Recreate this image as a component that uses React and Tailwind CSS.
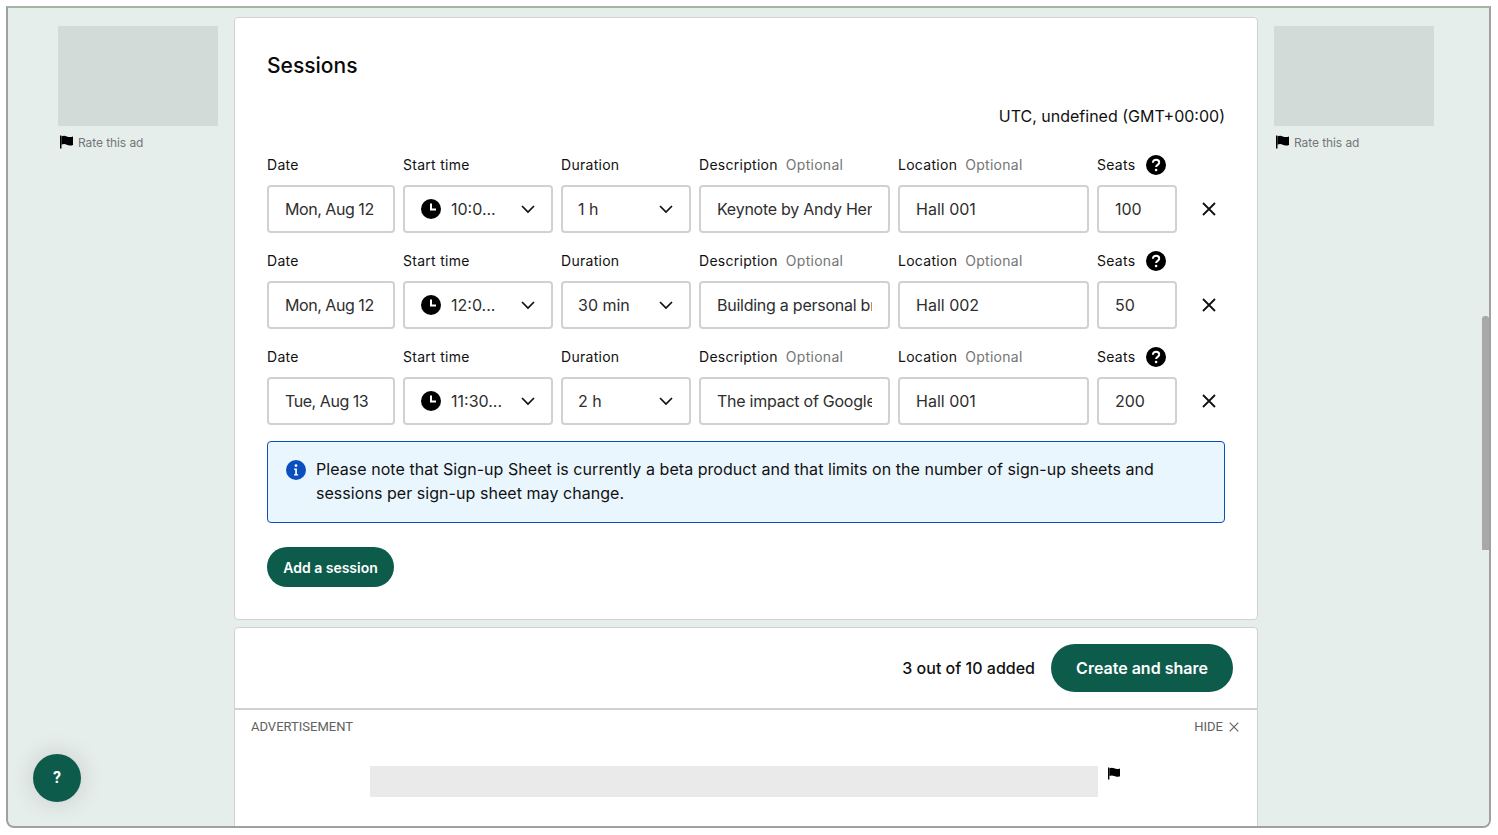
const font = { fontFamily: 'Inter, "Liberation Sans", sans-serif' };

const sessions = [
    { date: 'Mon, Aug 12', time: '10:0...', duration: '1 h', description: 'Keynote by Andy Henderson', location: 'Hall 001', seats: '100' },
    { date: 'Mon, Aug 12', time: '12:0...', duration: '30 min', description: 'Building a personal brand', location: 'Hall 002', seats: '50' },
    { date: 'Tue, Aug 13', time: '11:30...', duration: '2 h', description: 'The impact of Google on search', location: 'Hall 001', seats: '200' },
];

const Flag = ({ className }) => (
    <svg viewBox="0 0 14 14" className={className} fill="currentColor">
        <path d="M0 0h1.6v14H0z" />
        <path d="M1.6 1C3.6-.1 5.4.1 7.3 1c2 .9 4.200 1 6.700.1v9c-2.500.9-4.700.8-6.700-.1-1.900-.9-3.700-1.100-5.700 0z" />
    </svg>
);

const Clock = () => (
    <svg viewBox="0 0 20 20" className="w-5 h-5 shrink-0">
        <circle cx="10" cy="10" r="10" fill="#000" />
        <path d="M10 4.500V10.500H15" fill="none" stroke="#fff" strokeWidth="2" />
    </svg>
);

const Chevron = () => (
    <svg viewBox="0 0 16 16" className="w-4 h-4 shrink-0" fill="none" stroke="#111" strokeWidth="1.7">
        <path d="M2 5l6 6 6-6" />
    </svg>
);

const Help = () => (
    <svg viewBox="0 0 20 20" className="w-5 h-5">
        <circle cx="10" cy="10" r="10" fill="#000" />
        <path d="M6.900 7.800c0-1.900 1.400-3 3.200-3s3.100 1.100 3.100 2.700c0 2.400-3.100 2.400-3.100 4.600" fill="none" stroke="#fff" strokeWidth="2" />
        <circle cx="10.100" cy="15" r="1.300" fill="#fff" />
    </svg>
);

const Close = ({ className, width = 1.8 }) => (
    <svg viewBox="0 0 14 14" className={className} fill="none" stroke="currentColor" strokeWidth={width}>
        <path d="M1 1l12 12M13 1L1 13" />
    </svg>
);

const Label = ({ text, optional }) => (
    <div className="h-5 flex items-center text-[14px] tracking-[0.28px] leading-5 text-[#111] whitespace-nowrap">
        {text}
        {optional && <span className="ml-2 text-[#757575]">Optional</span>}
    </div>
);

const Field = ({ value, className = '' }) => (
    <input
        readOnly
        value={value}
        className={`w-full h-12 px-4 border-2 border-[#d1d1d1] rounded-[4px] bg-white text-[16px] text-[#2e2e2e] outline-none ${className}`}
        style={font}
    />
);

const Select = ({ children, className }) => (
    <div className={`h-12 border-2 border-[#d1d1d1] rounded-[4px] bg-white flex items-center text-[16px] text-[#2e2e2e] ${className}`}>
        {children}
    </div>
);

const SessionRow = ({ session }) => (
    <div className="grid grid-cols-[128px_150px_130px_191px_191px_80px_1fr] gap-x-2 gap-y-[10px]">
        <Label text="Date" />
        <Label text="Start time" />
        <Label text="Duration" />
        <Label text="Description" optional />
        <Label text="Location" optional />
        <div className="flex items-center gap-[11px]">
            <Label text="Seats" />
            <Help />
        </div>
        <div />
        <Field value={session.date} className="tracking-[-0.45px]" />
        <Select className="pl-4 pr-[15px]">
            <Clock />
            <span className="ml-[10px] flex-1 whitespace-nowrap">{session.time}</span>
            <Chevron />
        </Select>
        <Select className="pl-[15px] pr-[15px]">
            <span className="flex-1 whitespace-nowrap">{session.duration}</span>
            <Chevron />
        </Select>
        <Field value={session.description} className="tracking-[-0.25px]" />
        <Field value={session.location} />
        <Field value={session.seats} />
        <div className="flex items-center justify-end pr-[9px] text-[#111]">
            <Close className="w-[14px] h-[14px]" width={1.8} />
        </div>
    </div>
);

const SideAd = () => (
    <div className="w-40 shrink-0 pt-[18px]">
        <div className="h-[100px] bg-[#d3dbd8]" />
        <div className="flex items-center gap-[5px] mt-[9px] pl-[2px] text-[12px] leading-4 text-[#757575] tracking-[-0.08px]">
            <Flag className="w-[13px] h-[14px] text-black mt-[-2px]" />
            Rate this ad
        </div>
    </div>
);

const App = () => {
    return (
        <div className="w-[1498px] h-[835px] bg-white pt-[6px] pl-[6px] overflow-hidden" style={font}>
            <div className="relative w-[1485px] h-[822px] border-2 border-[#a0a0a0] border-t-[#a3b5a5] rounded-b-[8px] bg-[#e6eeec] flex overflow-hidden">
                <div className="flex-1 flex gap-4 pl-[50px] min-w-0">
                    <SideAd />
                    <div className="w-[1024px] shrink-0 pt-[9px]">
                        <div className="h-[603px] bg-white border border-[#d1d1d1] rounded-[4px] p-8">
                            <h2 className="text-[21px] leading-8 font-medium text-[#0a0a0a]">Sessions</h2>
                            <div className="text-right text-[16px] leading-6 text-[#111] mt-[22px] mb-[27px]">UTC, undefined (GMT+00:00)</div>
                            <div className="flex flex-col gap-[18px]">
                                {sessions.map((session, i) => (
                                    <SessionRow key={i} session={session} />
                                ))}
                            </div>
                            <div className="flex gap-[10px] h-[82px] mt-4 px-[18px] py-[15px] bg-[#e9f6fe] border border-[#0b4fbf] rounded-[4px] text-[16px] leading-6 tracking-[0.05px] text-[#111]">
                                <svg viewBox="0 0 20 20" className="w-5 h-5 shrink-0 mt-[3px]">
                                    <circle cx="10" cy="10" r="10" fill="#0b4fbf" />
                                    <circle cx="10" cy="5.600" r="1.400" fill="#fff" />
                                    <path d="M8.200 8.600h2.700v5.600h1.200v1.400H8v-1.400h1.200v-4.200h-1z" fill="#fff" />
                                </svg>
                                <p className="w-[850px]">Please note that Sign-up Sheet is currently a beta product and that limits on the number of sign-up sheets and sessions per sign-up sheet may change.</p>
                            </div>
                            <button className="mt-6 h-10 w-[127px] rounded-full bg-[#0d5c4b] text-white text-[14px] font-semibold">Add a session</button>
                        </div>
                        <div className="h-[82px] mt-[7px] bg-white border border-[#d1d1d1] rounded-t-[4px] flex items-center justify-end gap-4 pr-6">
                            <span className="text-[16px] font-medium text-[#111]">3 out of 10 added</span>
                            <button className="h-12 w-[182px] rounded-full bg-[#0d5c4b] text-white text-[16px] font-semibold">Create and share</button>
                        </div>
                        <div className="h-[120px] bg-white border-x border-[#d1d1d1] border-t-2 border-t-[#d1d1d1] mt-[-1px] px-4 pt-[9px]">
                            <div className="flex items-center justify-between text-[13px] leading-4 text-[#616161]" style={{ fontFamily: 'Roboto, sans-serif' }}>
                                <span>ADVERTISEMENT</span>
                                <span className="flex items-center gap-[6px] mr-[2px]">
                                    HIDE
                                    <Close className="w-[10px] h-[10px]" width={1.6} />
                                </span>
                            </div>
                            <div className="flex mt-[31px] pl-[119px] gap-[10px]">
                                <div className="w-[728px] h-[31px] bg-[#eaeaea]" />
                                <Flag className="w-3 h-[13px] text-black mt-[1px]" />
                            </div>
                        </div>
                    </div>
                    <SideAd />
                </div>
                <div className="w-[7px] shrink-0 bg-[#e6eeec] pt-[308px]">
                    <div className="h-[234px] bg-[#a8a8a8] rounded-t-[3px]" />
                </div>
                <button
                    className="absolute left-[25px] top-[746px] w-12 h-12 rounded-full bg-[#0d5c4b] text-white text-[16px] font-bold shadow-[0_0_24px_rgba(0,0,0,0.15)]"
                    style={{ fontFamily: 'Roboto, sans-serif' }}
                >
                    ?
                </button>
            </div>
        </div>
    );
};

export default App;
